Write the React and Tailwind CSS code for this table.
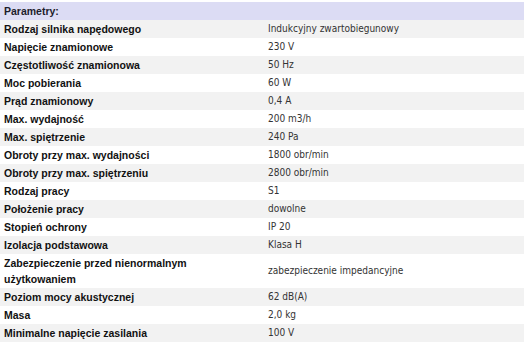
const rows = [
  ['Rodzaj silnika napędowego', 'Indukcyjny zwartobiegunowy'],
  ['Napięcie znamionowe', '230 V'],
  ['Częstotliwość znamionowa', '50 Hz'],
  ['Moc pobierania', '60 W'],
  ['Prąd znamionowy', '0,4 A'],
  ['Max. wydajność', '200 m3/h'],
  ['Max. spiętrzenie', '240 Pa'],
  ['Obroty przy max. wydajności', '1800 obr/min'],
  ['Obroty przy max. spiętrzeniu', '2800 obr/min'],
  ['Rodzaj pracy', 'S1'],
  ['Położenie pracy', 'dowolne'],
  ['Stopień ochrony', 'IP 20'],
  ['Izolacja podstawowa', 'Klasa H'],
  ['Zabezpieczenie przed nienormalnym użytkowaniem', 'zabezpieczenie impedancyjne'],
  ['Poziom mocy akustycznej', '62 dB(A)'],
  ['Masa', '2,0 kg'],
  ['Minimalne napięcie zasilania', '100 V'],
];

export default function App() {
  return (
    <div className="bg-white w-[529px] h-[344px] overflow-hidden pt-[2px] text-[10px] font-['DejaVu_Sans_Condensed','DejaVu_Sans',sans-serif]">
      <table className="w-[524px] table-fixed border-collapse">
        <colgroup>
          <col className="w-[264px]" />
          <col />
        </colgroup>
        <thead>
          <tr className="bg-[#dcdcf4]">
            <th colSpan={2} className="h-[18px] p-0 pl-[4px] text-left font-bold text-[10.5px] text-[#1c1c2c] leading-[18px] font-['Liberation_Sans',Arial,sans-serif]">
              Parametry:
            </th>
          </tr>
        </thead>
        <tbody>
          {rows.map(([name, value], i) => (
            <tr key={name} className={i % 2 === 0 ? 'bg-[#f2f2f2]' : 'bg-white'}>
              <td className="pl-[4px] pr-[64px] py-[1px] font-bold text-[10.5px] text-[#111] leading-[16px] align-middle font-['Liberation_Sans',Arial,sans-serif]">
                {name}
              </td>
              <td className="pl-[4px] pr-[4px] py-[1px] text-[#333] leading-[16px] align-middle">
                {value}
              </td>
            </tr>
          ))}
        </tbody>
      </table>
    </div>
  );
}
